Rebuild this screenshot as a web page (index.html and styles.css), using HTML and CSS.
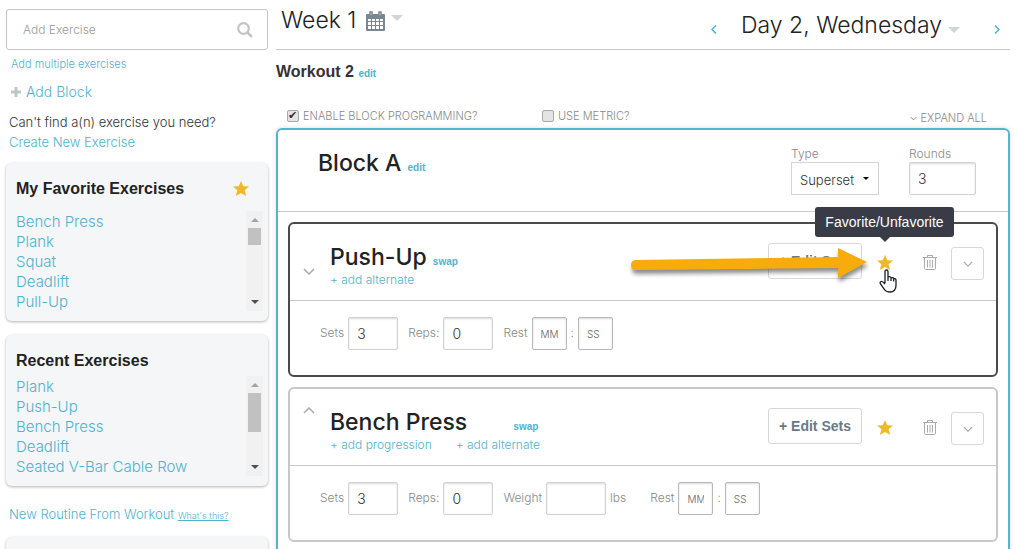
FILE: index.html
```
<!DOCTYPE html>
<html lang="en">
<head>
    <meta charset="utf-8">
    <title>Workout 2</title>
    <link rel="stylesheet" href="styles.css">
</head>
<body>
    <!-- shared icons -->
    <svg class="sprite">
        <symbol id="star" viewBox="0 0 16 15"><path d="M8 0l2.300 5.200 5.700.3-4.400 3.800L13.200 15 8 12 2.800 15l1.600-5.700L0 5.500l5.700-.3z"/></symbol>
        <symbol id="down" viewBox="0 0 12 7"><path d="M1 1l5 5 5-5" fill="none" stroke="currentColor" stroke-width="1.500"/></symbol>
        <symbol id="up" viewBox="0 0 12 7"><path d="M1 6l5-5 5 5" fill="none" stroke="currentColor" stroke-width="1.500"/></symbol>
        <symbol id="triangle" viewBox="0 0 12 6"><path d="M0 0h12L6 6z" fill="currentColor"/></symbol>
        <symbol id="trash" viewBox="0 0 14 15"><path d="M0 2.500h14M4.500 2V.5h5V2M1.500 3v10.500q0 1 1 1h9q1 0 1-1V3M4.500 5v7.500M7 5v7.500M9.500 5v7.500" fill="none" stroke="currentColor"/></symbol>
    </svg>

    <div class="page">
        <aside class="sidebar">
            <div class="search">
                <input type="text" class="searchInput" placeholder="Add Exercise" aria-label="Add Exercise">
                <svg class="searchIcon" viewBox="0 0 16 16"><circle cx="6.500" cy="6.500" r="5.300" fill="none" stroke="#c4c4c4" stroke-width="2.200"/><path d="M10.500 10.500L15 15" stroke="#c4c4c4" stroke-width="2.500"/></svg>
            </div>
            <a href="#" class="addMultiple">Add multiple exercises</a>
            <a href="#" class="addBlock"><svg class="plus" viewBox="0 0 10 10"><path d="M5 0v10M0 5h10" stroke="#c4c4c4" stroke-width="3"/></svg>Add Block</a>
            <div class="create">
                <p>Can't find a(n) exercise you need?</p>
                <a href="#">Create New Exercise</a>
            </div>

            <section class="card">
                <div class="cardTitle"><h3>My Favorite Exercises</h3><svg class="star"><use href="#star"/></svg></div>
                <div class="scroller">
                    <ul>
                        <li><a href="#">Bench Press</a></li>
                        <li><a href="#">Plank</a></li>
                        <li><a href="#">Squat</a></li>
                        <li><a href="#">Deadlift</a></li>
                        <li><a href="#">Pull-Up</a></li>
                    </ul>
                    <div class="scrollbar">
                        <svg class="arrowUp" viewBox="0 0 8 4"><path d="M0 4h8L4 0z" fill="#a3a3a3"/></svg>
                        <div class="thumb"></div>
                        <svg class="arrowDown" viewBox="0 0 8 4"><path d="M0 0h8L4 4z" fill="#505050"/></svg>
                    </div>
                </div>
            </section>

            <section class="card recent">
                <div class="cardTitle"><h3>Recent Exercises</h3></div>
                <div class="scroller">
                    <ul>
                        <li><a href="#">Plank</a></li>
                        <li><a href="#">Push-Up</a></li>
                        <li><a href="#">Bench Press</a></li>
                        <li><a href="#">Deadlift</a></li>
                        <li><a href="#">Seated V-Bar Cable Row</a></li>
                    </ul>
                    <div class="scrollbar">
                        <svg class="arrowUp" viewBox="0 0 8 4"><path d="M0 4h8L4 0z" fill="#a3a3a3"/></svg>
                        <div class="thumb tall"></div>
                        <svg class="arrowDown" viewBox="0 0 8 4"><path d="M0 0h8L4 4z" fill="#505050"/></svg>
                    </div>
                </div>
            </section>

            <p class="routine"><a href="#">New Routine From Workout</a> <a href="#" class="whats">What's this?</a></p>
            <section class="card"></section>
        </aside>

        <main class="main">
            <header class="topbar">
                <h1 class="week">Week 1
                    <svg class="calendar" viewBox="0 0 19 20"><path d="M1 3h17q1 0 1 1v15q0 1-1 1H1q-1 0-1-1V4q0-1 1-1z" fill="#7b8790"/><path d="M2 8h3v2H2zM6 8h3v2H6zM10 8h3v2h-3zM14 8h3v2h-3zM2 11h3v3H2zM6 11h3v3H6zM10 11h3v3h-3zM14 11h3v3h-3zM2 15h3v3H2zM6 15h3v3H6zM10 15h3v3h-3zM14 15h3v3h-3z" fill="#fff"/><path d="M4 1h2v4H4zM13 1h2v4h-2z" fill="#fff" stroke="#7b8790" stroke-width="1.500"/></svg>
                    <svg class="triangle"><use href="#triangle"/></svg>
                </h1>
                <div class="days">
                    <a href="#" aria-label="Previous day"><svg class="side" viewBox="0 0 6 9"><path d="M5 .5l-4 4 4 4" fill="none" stroke="currentColor" stroke-width="1.500"/></svg></a>
                    <h2 class="day">Day 2, Wednesday <svg class="triangle"><use href="#triangle"/></svg></h2>
                    <a href="#" aria-label="Next day"><svg class="side" viewBox="0 0 6 9"><path d="M1 .5l4 4-4 4" fill="none" stroke="currentColor" stroke-width="1.500"/></svg></a>
                </div>
            </header>

            <h3 class="workout">Workout 2 <a href="#" class="small">edit</a></h3>

            <div class="options">
                <label class="blockOption"><input type="checkbox" checked>ENABLE BLOCK PROGRAMMING?</label>
                <label><input type="checkbox">USE METRIC?</label>
                <a href="#" class="expand"><svg><use href="#down"/></svg>EXPAND ALL</a>
            </div>

            <section class="block">
                <div class="blockHead">
                    <h2 class="title">Block A <a href="#" class="small">edit</a></h2>
                    <div class="field type">
                        <label for="type">Type</label>
                        <div class="selectBox">
                            <select id="type"><option>Superset</option></select>
                            <svg viewBox="0 0 6 3"><path d="M0 0h6L3 3z"/></svg>
                        </div>
                    </div>
                    <div class="field rounds">
                        <label for="rounds">Rounds</label>
                        <input type="text" id="rounds" value="3">
                    </div>
                </div>

                <div class="exercises">
                    <article class="exercise active">
                        <div class="exHead">
                            <button class="toggle" aria-label="Expand"><svg><use href="#down"/></svg></button>
                            <div class="name">
                                <h2 class="title">Push-Up <a href="#" class="small swap">swap</a></h2>
                                <div class="links"><a href="#">+ add alternate</a></div>
                            </div>
                            <div class="actions">
                                <button class="editSets">+ Edit Sets</button>
                                <button class="icon fav" aria-label="Favorite"><svg class="star"><use href="#star"/></svg></button>
                                <button class="icon" aria-label="Delete"><svg class="trash"><use href="#trash"/></svg></button>
                                <button class="more" aria-label="More"><svg><use href="#down"/></svg></button>
                                <svg class="pointer" viewBox="0 0 246 44">
                                    <path d="M9 18L211 15V6l29 14-29 16v-10L9 28q-5 0-5-5t5-5z" fill="#f8ac0b"/>
                                </svg>
                                <div class="tooltip">Favorite/Unfavorite</div>
                                <svg class="hand" viewBox="0 0 18 24"><path d="M6 14V2.500Q6 1 7.500 1T9 2.500V8q2.500-1 3 1 2.300-1 2.700.800 2.300-.6 2.300 1.400v5Q17 23 11 23q-4 0-5.500-2.500L1.500 15q-1-2 .5-2.500 1.300-.5 4 2.500M9 8v4M12 9v3M14.700 10v2.500" fill="#fff" stroke="#1c1c28" stroke-width="1.300"/></svg>
                            </div>
                        </div>
                        <div class="exBody">
                            <label for="sets1">Sets</label><input type="text" id="sets1" value="3">
                            <label for="reps1">Reps:</label><input type="text" id="reps1" value="0">
                            <label for="min1">Rest</label><input type="text" class="time" id="min1" placeholder="MM">
                            <span>:</span><input type="text" class="time" placeholder="SS" aria-label="Rest seconds">
                        </div>
                    </article>

                    <article class="exercise">
                        <div class="exHead">
                            <button class="toggle open" aria-label="Collapse"><svg><use href="#up"/></svg></button>
                            <div class="name">
                                <h2 class="title wide">Bench Press <a href="#" class="small swap">swap</a></h2>
                                <div class="links"><a href="#">+ add progression</a><a href="#">+ add alternate</a></div>
                            </div>
                            <div class="actions">
                                <button class="editSets">+ Edit Sets</button>
                                <button class="icon fav" aria-label="Favorite"><svg class="star"><use href="#star"/></svg></button>
                                <button class="icon" aria-label="Delete"><svg class="trash"><use href="#trash"/></svg></button>
                                <button class="more" aria-label="More"><svg><use href="#down"/></svg></button>
                            </div>
                        </div>
                        <div class="exBody">
                            <label for="sets2">Sets</label><input type="text" id="sets2" value="3">
                            <label for="reps2">Reps:</label><input type="text" id="reps2" value="0">
                            <label for="weight2">Weight</label><input type="text" class="weight" id="weight2">
                            <span class="unit">lbs</span>
                            <label for="min2">Rest</label><input type="text" class="time" id="min2" placeholder="MM">
                            <span>:</span><input type="text" class="time" placeholder="SS" aria-label="Rest seconds">
                        </div>
                    </article>
                </div>
            </section>
        </main>
    </div>
</body>
</html>
```
FILE: styles.css
```
* {
    box-sizing: border-box;
}
body {
    margin: 0;
    height: 100vh;
    overflow: hidden;
    background: #fff;
    color: #333;
    font-family: Inter, "Liberation Sans", sans-serif;
    font-size: 14px;
    font-weight: 300;
    line-height: 20px;
}
h1, h2, h3, p, ul {
    margin: 0;
    padding: 0;
}
ul {
    list-style: none;
}
a {
    color: #4fb3cb;
    text-decoration: none;
}
input, select, button {
    font-family: inherit;
    font-weight: 300;
    margin: 0;
}
button {
    background: none;
    border: none;
    padding: 0;
    color: #aaa;
}
svg {
    display: block;
    flex: none;
}
.sprite {
    display: none;
}
.page {
    display: grid;
    grid-template-columns: 262px 1fr;
    column-gap: 8px;
    padding: 0 8px 0 6px;
}

/* sidebar */
.sidebar {
    padding-top: 9px;
}
.search {
    display: flex;
    align-items: center;
    height: 41px;
    padding: 0 14px 0 16px;
    border: 1px solid #c4c4c4;
    border-radius: 3px;
}
.searchInput {
    flex: 1;
    min-width: 0;
    border: none;
    outline: none;
    padding: 0;
    font-size: 12px;
}
.searchInput::placeholder {
    color: #999;
}
.searchIcon {
    width: 16px;
    height: 16px;
}
.addMultiple {
    display: block;
    margin: 4px 0 0 5px;
    font-size: 11px;
}
.addBlock {
    display: flex;
    align-items: center;
    gap: 5px;
    margin: 8px 0 0 5px;
}
.plus {
    width: 10px;
    height: 10px;
}
.create {
    margin: 10px 0 11px 3px;
    font-size: 13px;
}
.card {
    min-height: 60px;
    margin-bottom: 14px;
    padding: 16px 5px 9px 10px;
    background: #f4f6f8;
    border-radius: 6px;
    box-shadow: 0 1px 3px rgba(0, 0, 0, 0.3);
}
.cardTitle {
    display: flex;
    justify-content: space-between;
    padding-right: 14px;
    margin-bottom: 12px;
}
.cardTitle h3 {
    color: #222;
    font-family: "Liberation Sans", sans-serif;
    font-size: 16px;
    font-weight: bold;
    line-height: 20px;
}
.recent .cardTitle {
    margin-bottom: 5px;
}
.star {
    width: 16px;
    height: 15px;
    fill: #edb92a;
}
.cardTitle .star {
    margin-top: 2px;
}
.scroller {
    display: flex;
    justify-content: space-between;
    font-size: 15px;
}
.scroller ul {
    padding-top: 1px;
}
.scrollbar {
    display: flex;
    flex-direction: column;
    align-items: center;
    width: 17px;
    height: 100px;
    padding: 7px 0;
    background: #f1f1f1;
}
.arrowUp, .arrowDown {
    width: 8px;
    height: 4px;
}
.arrowDown {
    margin-top: auto;
}
.thumb {
    width: 13px;
    height: 17px;
    margin-top: 6px;
    background: #c1c1c1;
}
.tall {
    height: 39px;
}
.routine {
    margin: 18px 0 11px 3px;
    font-size: 13px;
}
.whats {
    font-size: 9px;
    text-decoration: underline;
}

/* main column */
.topbar {
    display: flex;
    justify-content: space-between;
    height: 50px;
    padding: 0 10px 0 5px;
    border-bottom: 1px solid #c8c8c8;
}
.week, .day {
    display: flex;
    color: #222;
    font-size: 23px;
    font-weight: 300;
    line-height: 40px;
}
.calendar {
    width: 19px;
    height: 20px;
    margin: 11px 6px 0 10px;
}
.triangle {
    width: 12px;
    height: 6px;
    color: #d0d5d9;
}
.week .triangle {
    margin-top: 15px;
}
.days {
    display: flex;
    padding-top: 5px;
}
.day .triangle {
    margin: 22px 0 0 6px;
}
.side {
    width: 6px;
    height: 9px;
    margin-top: 20px;
}
.day {
    margin: 0 34px 0 24px;
}
.workout {
    margin: 12px 0 0;
    color: #333;
    font-family: "Liberation Sans", sans-serif;
    font-size: 16px;
}
.small {
    font-family: "Liberation Sans", sans-serif;
    font-size: 10px;
    font-weight: bold;
    line-height: 10px;
}
.options {
    display: flex;
    height: 20px;
    margin: 26px 23px 0 11px;
    color: #888;
    font-size: 11px;
}
.options label {
    display: flex;
    align-items: center;
    gap: 4px;
    height: 16px;
}
.options input {
    appearance: none;
    display: grid;
    width: 12px;
    height: 12px;
    border: 1px solid #a8a8a8;
    border-radius: 2px;
    background: #e4e4e4;
}
.options input:checked::after {
    content: "✔";
    color: #333;
    font: 11px/10px "DejaVu Sans", sans-serif;
}
.blockOption {
    width: 255px;
}
.expand {
    display: flex;
    align-items: center;
    gap: 3px;
    margin-left: auto;
    color: #888;
}
.expand svg {
    width: 7px;
    height: 5px;
}
.block {
    border: 2px solid #52b6ce;
    border-radius: 6px;
    box-shadow: 0 0 4px rgba(0, 0, 0, 0.15);
}
.blockHead {
    display: flex;
    align-items: flex-start;
    height: 82px;
    padding: 16px 32px 0 40px;
    border-bottom: 1px solid #c8c8c8;
}
.title {
    color: #222;
    font-size: 23px;
    font-weight: 500;
    line-height: 34px;
}
.blockHead .title {
    margin-right: auto;
}
.field {
    display: flex;
    flex-direction: column;
    color: #888;
    font-size: 12px;
    line-height: 16px;
}
.rounds {
    margin-left: 30px;
}
.selectBox {
    display: flex;
    align-items: center;
    width: 88px;
    height: 33px;
    border: 1px solid #d5d5d5;
}
.selectBox select {
    appearance: none;
    width: 71px;
    height: 31px;
    padding: 2px 0 0 8px;
    border: none;
    background: none;
    color: #333;
    font-size: 13px;
}
.selectBox svg {
    width: 6px;
    height: 3px;
}
.field input, .exBody input {
    width: 50px;
    height: 33px;
    padding: 0 8px;
    border: 1px solid #d2d2d2;
    border-radius: 2px;
    box-shadow: inset 0 1px 2px rgba(0, 0, 0, 0.15);
    color: #333;
    font-size: 14px;
}
.field input {
    width: 67px;
}
.exercises {
    display: flex;
    flex-direction: column;
    gap: 10px;
    padding: 10px;
}
.exercise {
    border: 2px solid #c8c8c8;
    border-radius: 6px;
}
.active {
    border-color: #4a4a4a;
}
.exHead {
    display: flex;
    height: 77px;
    padding: 0 12px;
    border-bottom: 1px solid #c8c8c8;
}
.toggle {
    width: 14px;
    margin-right: 14px;
    padding-top: 18px;
}
.toggle svg {
    width: 12px;
    height: 7px;
    margin: auto;
}
.toggle.open {
    align-self: flex-start;
}
.name {
    flex: 1;
    padding-top: 18px;
}
.name .title {
    line-height: 30px;
}
.links {
    display: flex;
    gap: 24px;
    font-size: 12px;
    line-height: 16px;
}
.wide .swap {
    margin-left: 40px;
}
.actions {
    position: relative;
    display: flex;
    align-items: flex-start;
    padding-top: 19px;
}
.editSets {
    width: 94px;
    height: 36px;
    border: 1px solid #d8d8d8;
    border-radius: 3px;
    color: #687a86;
    font: bold 14px "Liberation Sans", sans-serif;
}
.icon {
    display: grid;
    place-items: center;
    width: 43px;
    height: 38px;
}
.fav {
    width: 46px;
}
.trash {
    width: 14px;
    height: 15px;
}
.more {
    display: grid;
    place-items: center;
    width: 33px;
    height: 33px;
    margin-top: 4px;
    border: 1px solid #d8d8d8;
    border-radius: 3px;
}
.more svg {
    width: 10px;
    height: 6px;
}
.pointer {
    position: absolute;
    right: 111px;
    top: 18px;
    width: 246px;
    height: 44px;
    filter: drop-shadow(1px 4px 2px rgba(0, 0, 0, 0.45));
}
.tooltip {
    position: absolute;
    right: 30px;
    top: -17px;
    width: 139px;
    height: 30px;
    border-radius: 3px;
    background: #393b47;
    color: #fff;
    font: 14px/30px "Liberation Sans", sans-serif;
    text-align: center;
}
.tooltip::after {
    content: "";
    position: absolute;
    left: 65px;
    top: 30px;
    border: 5px solid transparent;
    border-top-color: #393b47;
}
.hand {
    position: absolute;
    right: 87px;
    top: 45px;
    width: 18px;
    height: 24px;
}
.exBody {
    display: flex;
    align-items: center;
    height: 74px;
    padding: 0 30px 10px;
    color: #888;
    font-size: 12px;
}
.exBody label {
    margin-right: 4px;
}
.exBody input + label {
    margin-left: 10px;
}
.exBody .time {
    width: 35px;
    border-color: #b8b8b8;
    font-size: 12px;
}
.exBody .time::placeholder {
    color: #666;
    font-size: 10px;
}
.exBody span {
    margin: 0 4px;
}
.exBody .weight {
    width: 60px;
}
.exBody .unit {
    margin-right: 24px;
}
```
